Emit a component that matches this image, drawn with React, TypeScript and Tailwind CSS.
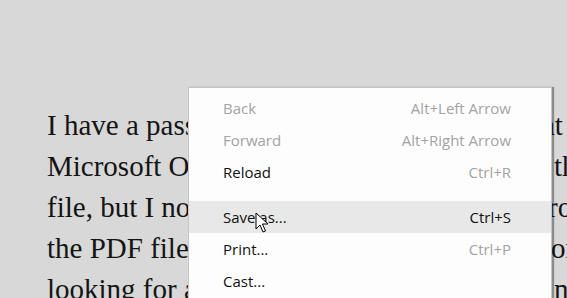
import React from "react";

const items = [
  { label: "Back", shortcut: "Alt+Left Arrow", disabled: true },
  { label: "Forward", shortcut: "Alt+Right Arrow", disabled: true },
  { label: "Reload", shortcut: "Ctrl+R", disabled: false, scDim: true },
];
const items2 = [
  { label: "Save as...", shortcut: "Ctrl+S", hl: true },
  { label: "Print...", shortcut: "Ctrl+P", scDim: true },
  { label: "Cast...", shortcut: "" },
];

const lines = [
  { left: "I have a password-protected PDF file th", right: "at", w: "w-[495px]" },
  { left: "Microsoft Office gave me to open with", right: "the", w: "w-[507px]" },
  { left: "file, but I now want to remove the pass", right: "ro", w: "w-[501px]" },
  { left: "the PDF file so that I can share it f", right: "or", w: "w-[504px]" },
  { left: "looking for a simple way to do it on", right: "ne", w: "w-[507px]" },
];

export default function App() {
  return (
    <div className="relative w-[567px] h-[298px] overflow-hidden bg-[#d8d8d8]">
      <div
        className="pt-[105px] pl-[47px] text-[29px] leading-[41px] text-[#141414] whitespace-nowrap"
        style={{ fontFamily: '"Liberation Serif", serif' }}
      >
        {lines.map((l) => (
          <div key={l.left} className="flex">
            <span className={l.w + " shrink-0 overflow-hidden"}>{l.left}</span>
            <span>{l.right}</span>
          </div>
        ))}
      </div>

      <div
        className="absolute left-[188px] top-[87px] w-[364px] h-[230px] bg-[#fdfdfd] border border-[#c6c6c6] shadow-[2px_0_1px_rgba(0,0,0,0.35)] pt-[4px] text-[15px]"
        style={{ fontFamily: '"Open Sans", "Noto Sans", sans-serif' }}
      >
        {items.map((it) => (
          <div key={it.label} className="flex items-center justify-between h-[32px] pl-[34px] pr-[40px]">
            <span className={it.disabled ? "text-[#a3a3a3]" : "text-[#111]"}>{it.label}</span>
            <span className="text-[#a3a3a3]">{it.shortcut}</span>
          </div>
        ))}
        <div className="h-[13px]" />
        {items2.map((it) => (
          <div
            key={it.label}
            className={
              "flex items-center justify-between h-[32px] pl-[34px] pr-[40px] " +
              (it.hl ? "bg-[#e8e8e8]" : "")
            }
          >
            <span className="text-[#111]">{it.label}</span>
            <span className={it.scDim ? "text-[#a3a3a3]" : "text-[#111]"}>{it.shortcut}</span>
          </div>
        ))}
      </div>

      <svg className="absolute left-[255px] top-[212px]" width="14" height="22" viewBox="0 0 14 22">
        <path d="M1 1 L1 17 L5 13 L8 20 L10.5 19 L7.5 12 L13 12 Z" fill="#fff" stroke="#000" strokeWidth="1" strokeLinejoin="miter" />
      </svg>
    </div>
  );
}
